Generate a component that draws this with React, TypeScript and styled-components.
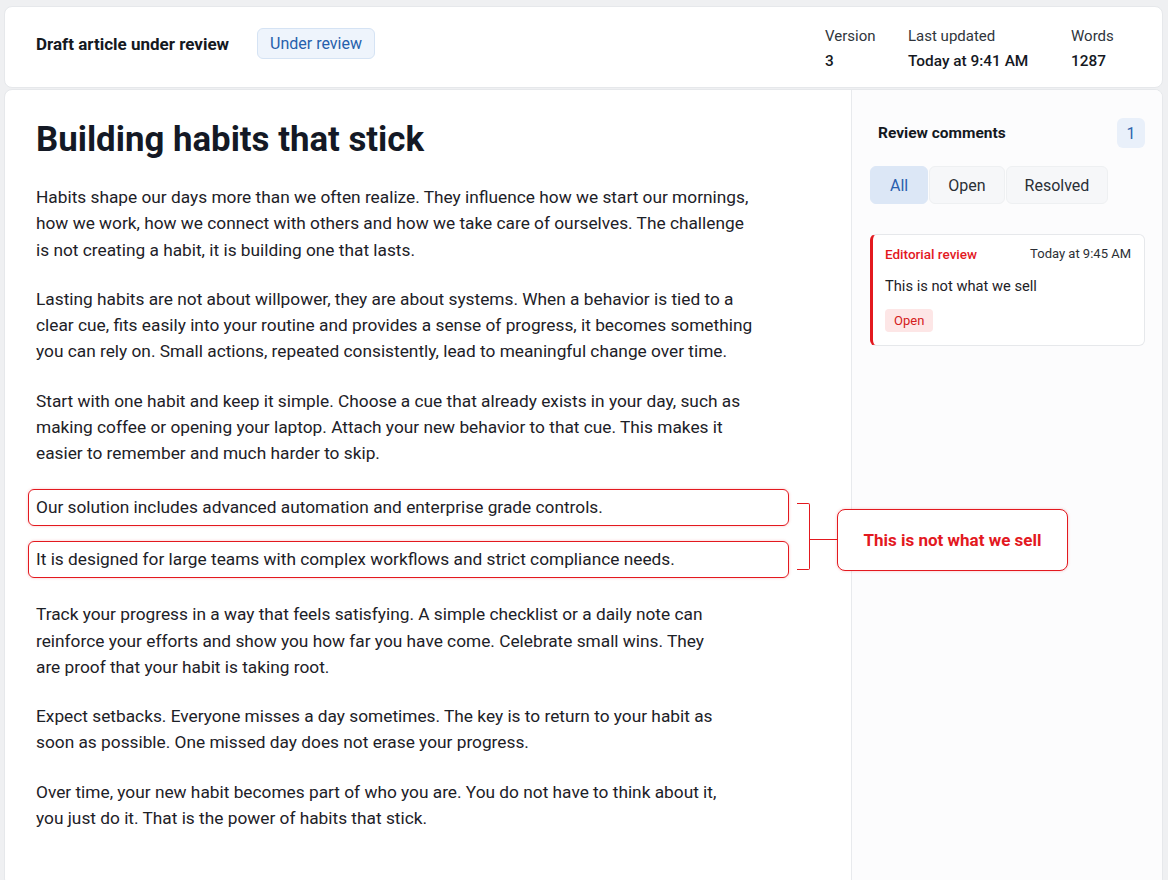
import { Fragment } from 'react'
import styled, { createGlobalStyle, css } from 'styled-components'

const RED = '#e3191f'

const GlobalStyle = createGlobalStyle`
  * { box-sizing: border-box; }
  html, body { margin: 0; padding: 0; }
  body {
    background: #eff0f2;
    font-family: Roboto, 'Liberation Sans', Arial, sans-serif;
    color: #1d2127;
  }
`

const Page = styled.div`
  min-height: 880px;
  padding: 6px 5px 3px 4px;
  display: flex;
  flex-direction: column;
  gap: 1px;
`

const Header = styled.header`
  height: 82px;
  flex-shrink: 0;
  background: #fff;
  border: 1px solid #e6e8eb;
  border-radius: 8px;
  display: flex;
  align-items: flex-start;
  justify-content: space-between;
  padding: 0 31px;
`

const HeaderLeft = styled.div`
  display: flex;
  align-items: center;
  margin-top: 21px;
`

const DocTitle = styled.div`
  font-size: 17px;
  font-weight: 700;
  color: #15191f;
`

const StatusBadge = styled.span`
  margin-left: 28px;
  height: 31px;
  display: inline-flex;
  align-items: center;
  padding: 0 12px;
  font-size: 16px;
  color: #2660ac;
  background: #eef4fc;
  border: 1px solid #d5e3f4;
  border-radius: 6px;
`

const Meta = styled.div`
  display: grid;
  grid-template-columns: 83px 163px 60px;
  margin-top: 18px;
`

const MetaItem = styled.div`
  display: flex;
  flex-direction: column;
  gap: 3px;
`

const MetaLabel = styled.span`
  font-size: 15px;
  line-height: 22px;
  color: #30353c;
`

const MetaValue = styled.span`
  font-size: 15.4px;
  line-height: 22px;
  font-weight: 500;
  color: #15191f;
`

const Body = styled.main`
  flex: 1;
  display: grid;
  grid-template-columns: 1fr 311px;
  background: #fff;
  border: 1px solid #e6e8eb;
  border-radius: 8px;
  overflow: hidden;
`

const Article = styled.article`
  padding: 27px 70px 32px 31px;
`

const Title = styled.h1`
  margin: 0 0 23px;
  font-size: 34.8px;
  line-height: 44px;
  font-weight: 700;
  color: #141925;
`

const Para = styled.p`
  margin: 0 0 23px;
  white-space: nowrap;
  font-size: 17.3px;
  line-height: 26.3px;
  color: #1d2127;
`

const Flagged = styled.div`
  position: relative;
  display: flex;
  flex-direction: column;
  gap: 15px;
  margin: -1px -8px 23px;
`

const FlaggedLine = styled.div`
  border: 1.5px solid ${RED};
  border-radius: 6px;
  padding: 4.5px 7px;
  font-size: 17.3px;
  line-height: 26.3px;
  color: #1d2127;
  box-shadow: 0 0 3px rgba(227, 25, 31, 0.25);
`

const Annotation = styled.div`
  position: absolute;
  left: calc(100% + 8px);
  top: 14px;
  height: 67px;
  display: flex;
  align-items: flex-start;
`

const Bracket = styled.div`
  width: 13px;
  height: 67px;
  border: 1.5px solid ${RED};
  border-left: none;
  border-radius: 0 2px 2px 0;
`

const Connector = styled.div`
  width: 27px;
  height: 1.5px;
  margin-top: 36px;
  background: ${RED};
`

const Callout = styled.div`
  width: 231px;
  height: 62px;
  margin-top: 6px;
  display: flex;
  align-items: center;
  justify-content: center;
  background: #fff;
  border: 1.5px solid ${RED};
  border-radius: 8px;
  font-size: 17px;
  font-weight: 700;
  color: ${RED};
  box-shadow: 0 0 3px rgba(227, 25, 31, 0.25);
`

const Sidebar = styled.aside`
  background: #fcfcfd;
  border-left: 1px solid #e8eaed;
  padding: 28px 17px 28px 18px;
`

const SideHeader = styled.div`
  height: 30px;
  display: flex;
  align-items: center;
  justify-content: space-between;
  padding-left: 8px;
`

const SideTitle = styled.span`
  font-size: 15.5px;
  font-weight: 700;
  color: #15191f;
`

const Count = styled.span`
  width: 28px;
  height: 30px;
  display: inline-flex;
  align-items: center;
  justify-content: center;
  background: #e9f0fa;
  border-radius: 6px;
  font-size: 16px;
  color: #2f64ad;
`

const Tabs = styled.div`
  margin-top: 18px;
  display: flex;
  gap: 1px;
`

const Tab = styled.button<{ $active?: boolean }>`
  height: 38px;
  padding: 0 18px;
  font-family: inherit;
  font-size: 16px;
  border-radius: 6px;
  border: 1px solid #eef0f2;
  background: #f6f7f9;
  color: #2a2f36;
  cursor: pointer;
  ${p => p.$active && css`
    background: #dce7f6;
    border-color: #dce7f6;
    color: #2a5fae;
    padding: 0 19px;
  `}
`

const CommentCard = styled.div`
  margin-top: 30px;
  background: #fff;
  border: 1px solid #e6e8eb;
  border-left: 3px solid ${RED};
  border-radius: 6px;
  padding: 9px 13px 13px 12px;
`

const CommentHead = styled.div`
  display: flex;
  justify-content: space-between;
  align-items: center;
  line-height: 20px;
`

const Author = styled.span`
  font-size: 13.5px;
  font-weight: 500;
  color: ${RED};
`

const Time = styled.span`
  font-size: 13px;
  color: #2b2f36;
`

const CommentText = styled.div`
  margin-top: 12px;
  font-size: 14.7px;
  line-height: 20px;
  color: #1d2127;
`

const Pill = styled.span`
  margin-top: 13px;
  height: 23px;
  display: inline-flex;
  align-items: center;
  padding: 0 9px;
  background: #fde6e6;
  border-radius: 4px;
  font-size: 13px;
  color: #d42020;
`

const before = [
  [
    'Habits shape our days more than we often realize. They influence how we start our mornings,',
    'how we work, how we connect with others and how we take care of ourselves. The challenge',
    'is not creating a habit, it is building one that lasts.',
  ],
  [
    'Lasting habits are not about willpower, they are about systems. When a behavior is tied to a',
    'clear cue, fits easily into your routine and provides a sense of progress, it becomes something',
    'you can rely on. Small actions, repeated consistently, lead to meaningful change over time.',
  ],
  [
    'Start with one habit and keep it simple. Choose a cue that already exists in your day, such as',
    'making coffee or opening your laptop. Attach your new behavior to that cue. This makes it',
    'easier to remember and much harder to skip.',
  ],
]

const flagged = [
  'Our solution includes advanced automation and enterprise grade controls.',
  'It is designed for large teams with complex workflows and strict compliance needs.',
]

const after = [
  [
    'Track your progress in a way that feels satisfying. A simple checklist or a daily note can',
    'reinforce your efforts and show you how far you have come. Celebrate small wins. They',
    'are proof that your habit is taking root.',
  ],
  [
    'Expect setbacks. Everyone misses a day sometimes. The key is to return to your habit as',
    'soon as possible. One missed day does not erase your progress.',
  ],
  [
    'Over time, your new habit becomes part of who you are. You do not have to think about it,',
    'you just do it. That is the power of habits that stick.',
  ],
]

const Paragraph = ({ lines }: { lines: string[] }) => (
  <Para>
    {lines.map((l, i) => (
      <Fragment key={i}>
        {i > 0 && <br />}
        {l}
      </Fragment>
    ))}
  </Para>
)

const App = () => {
  return (
    <>
      <GlobalStyle />
      <Page>
        <Header>
          <HeaderLeft>
            <DocTitle>Draft article under review</DocTitle>
            <StatusBadge>Under review</StatusBadge>
          </HeaderLeft>
          <Meta>
            <MetaItem>
              <MetaLabel>Version</MetaLabel>
              <MetaValue>3</MetaValue>
            </MetaItem>
            <MetaItem>
              <MetaLabel>Last updated</MetaLabel>
              <MetaValue>Today at 9:41 AM</MetaValue>
            </MetaItem>
            <MetaItem>
              <MetaLabel>Words</MetaLabel>
              <MetaValue>1287</MetaValue>
            </MetaItem>
          </Meta>
        </Header>
        <Body>
          <Article>
            <Title>Building habits that stick</Title>
            {before.map((p, i) => <Paragraph key={i} lines={p} />)}
            <Flagged>
              {flagged.map((t, i) => <FlaggedLine key={i}>{t}</FlaggedLine>)}
              <Annotation>
                <Bracket />
                <Connector />
                <Callout>This is not what we sell</Callout>
              </Annotation>
            </Flagged>
            {after.map((p, i) => <Paragraph key={i} lines={p} />)}
          </Article>
          <Sidebar>
            <SideHeader>
              <SideTitle>Review comments</SideTitle>
              <Count>1</Count>
            </SideHeader>
            <Tabs>
              <Tab $active>All</Tab>
              <Tab>Open</Tab>
              <Tab>Resolved</Tab>
            </Tabs>
            <CommentCard>
              <CommentHead>
                <Author>Editorial review</Author>
                <Time>Today at 9:45 AM</Time>
              </CommentHead>
              <CommentText>This is not what we sell</CommentText>
              <Pill>Open</Pill>
            </CommentCard>
          </Sidebar>
        </Body>
      </Page>
    </>
  )
}

export default App
